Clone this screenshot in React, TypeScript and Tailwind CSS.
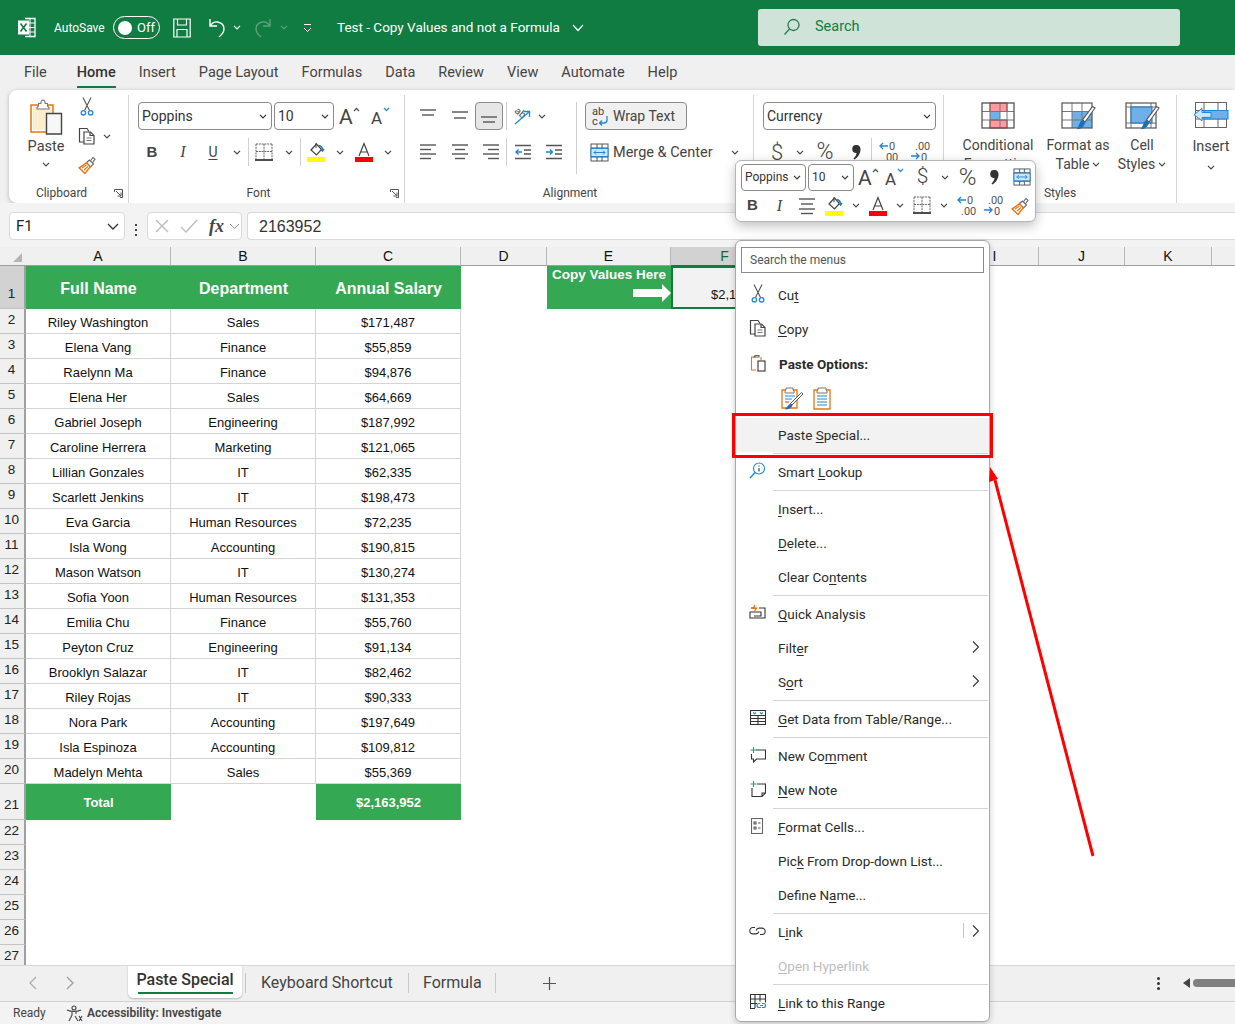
import React from 'react';

const people: [string, string, string][] = [
  ['Riley Washington', 'Sales', '$171,487'],
  ['Elena Vang', 'Finance', '$55,859'],
  ['Raelynn Ma', 'Finance', '$94,876'],
  ['Elena Her', 'Sales', '$64,669'],
  ['Gabriel Joseph', 'Engineering', '$187,992'],
  ['Caroline Herrera', 'Marketing', '$121,065'],
  ['Lillian Gonzales', 'IT', '$62,335'],
  ['Scarlett Jenkins', 'IT', '$198,473'],
  ['Eva Garcia', 'Human Resources', '$72,235'],
  ['Isla Wong', 'Accounting', '$190,815'],
  ['Mason Watson', 'IT', '$130,274'],
  ['Sofia Yoon', 'Human Resources', '$131,353'],
  ['Emilia Chu', 'Finance', '$55,760'],
  ['Peyton Cruz', 'Engineering', '$91,134'],
  ['Brooklyn Salazar', 'IT', '$82,462'],
  ['Riley Rojas', 'IT', '$90,333'],
  ['Nora Park', 'Accounting', '$197,649'],
  ['Isla Espinoza', 'Accounting', '$109,812'],
  ['Madelyn Mehta', 'Sales', '$55,369'],
];

const Chev = ({ color = '#444', size = 8 }: { color?: string; size?: number }) => (
  <svg width={size} height={size * 0.625} viewBox="0 0 8 5" fill="none">
    <path d="M1 .8l3 3 3-3" stroke={color} strokeWidth="1.2" />
  </svg>
);

const Cell: React.FC<{ className?: string; children?: React.ReactNode }> = ({ className = '', children }) => (
  <div className={`flex h-full shrink-0 items-center justify-center ${className}`}>{children}</div>
);

const Sep = () => <div className="h-full w-px shrink-0 bg-[#d0d0d0]" />;

// stack of grey bars used by the alignment icons
const Bars = ({ rows, color = '#555' }: { rows: [number, number, number][]; color?: string }) => (
  <svg width="18" height="18" viewBox="0 0 18 18" fill="none">
    {rows.map(([x1, x2, y]) => (
      <line key={`${x1}-${y}`} x1={x1} x2={x2} y1={y} y2={y} stroke={color} strokeWidth="1.4" />
    ))}
  </svg>
);

const Scissors = () => (
  <svg width="14" height="19" viewBox="0 0 14 19" fill="none">
    <path d="M3 .5l6.500 13M11 .5L4.500 13.500" stroke="#555" strokeWidth="1.100" />
    <circle cx="3.400" cy="15.800" r="2.200" stroke="#2b88d8" strokeWidth="1.400" />
    <circle cx="10.600" cy="15.800" r="2.200" stroke="#2b88d8" strokeWidth="1.400" />
  </svg>
);

const CopyIcon = () => (
  <svg width="18" height="18" viewBox="0 0 18 18" fill="none" stroke="#444" strokeWidth="1.200">
    <path d="M6 15H1.500V1.500H9l2 3" />
    <path d="M6 5h6.500l3.500 3.500V17H6z" fill="#fff" />
    <path d="M12 5v3.500h4" />
    <path d="M8.500 11h5M8.500 13.500h5" stroke="#777" />
  </svg>
);

const Brush = ({ size = 18 }: { size?: number }) => (
  <svg width={size} height={size} viewBox="0 0 18 18" fill="none">
    <path d="M11.500 6L15 1.500l2 1.800-3.500 4.700" fill="#fff" stroke="#666" strokeWidth="1.100" />
    <path d="M8.500 6.500L11.500 4l4 4-3 3z" fill="#fff" stroke="#666" strokeWidth="1.100" />
    <path d="M8.500 6.800L1 11.800 7 17.500l5.300-6.600z" fill="#fff" stroke="#e8760f" strokeWidth="1.400" />
    <path d="M4 12l4.500-3M6 14l4-3.500" stroke="#e8760f" strokeWidth="1.100" />
  </svg>
);

const ClipboardBig = () => (
  <svg width="34" height="36" viewBox="0 0 34 36" fill="none">
    <path d="M2 6h22v27H2z" fill="#fff" stroke="#e8760f" strokeWidth="1.500" />
    <path d="M4 8h18v23H4z" fill="#fbeed0" />
    <path d="M9.500 7V4.500h2.300C12 2.200 13 1 14 1s2 1.200 2.200 3.500h2.300V7l1.500 1.500V10H8V8.500z" fill="#fff" stroke="#777" strokeWidth="1.100" />
    <path d="M17.500 14.500H32.500V35H17.500z" fill="#f7f7f7" stroke="#444" strokeWidth="1.400" />
  </svg>
);

const GrowFont = ({ up }: { up: boolean }) => (
  <svg width="22" height="22" viewBox="0 0 22 22" fill="none">
    <text x="0" y="19" fontSize={up ? 21 : 17} fill="#444" fontFamily="Roboto">A</text>
    <path d={up ? 'M15 6l2.500-2.500L20 6' : 'M13 3l2.500 2.500L18 3'} stroke={up ? '#555' : '#2b88d8'} strokeWidth="1.300" />
  </svg>
);

const BorderIcon = () => (
  <svg width="18" height="19" viewBox="0 0 18 19" fill="none">
    <path d="M1 1h16M1 8.500h16M1 1v15M9 1v15M17 1v15" stroke="#666" strokeDasharray="2 .8" />
    <path d="M0 17h18" stroke="#222" strokeWidth="1.600" />
  </svg>
);

const FillIcon = ({ w = 18 }: { w?: number }) => (
  <svg width={w} height="20" viewBox="0 0 18 20" fill="none">
    <path d="M4 8l5.500-6 5 5.500-5 5.500z" fill="#fff" stroke="#444" strokeWidth="1.200" />
    <path d="M9 1v5" stroke="#444" />
    <path d="M12 3.500c2 .5 3.500 2 3.500 4.500M14 7l1.500 2L17 7" stroke="#1f78c1" strokeWidth="1.400" />
    <rect x="0" y="15" width="18" height="5" fill="#ffff00" />
  </svg>
);

const ColorA = ({ w = 18 }: { w?: number }) => (
  <svg width={w} height="20" viewBox="0 0 18 20" fill="none">
    <path d="M4 14L9 1.500 14 14M5.800 10h6.400" stroke="#444" strokeWidth="1.200" />
    <rect x="0" y="15" width="18" height="5" fill="#ff0000" />
  </svg>
);

const Outdent = ({ right }: { right?: boolean }) => (
  <svg width="18" height="18" viewBox="0 0 18 18" fill="none">
    <path d="M1 2.500h16M1 15.500h16M10 7h7M10 11h7" stroke="#555" strokeWidth="1.400" />
    <path d={right ? 'M1 9h6M5 6.500L7.500 9 5 11.500' : 'M8 9H2M4.500 6.500L2 9l2.500 2.500'} stroke="#1f87d6" strokeWidth="1.400" />
  </svg>
);

const MergeIcon = ({ size = 19 }: { size?: number }) => (
  <svg width={size} height={size} viewBox="0 0 19 19" fill="none">
    <rect x="1" y="1" width="17" height="17" fill="#fff" stroke="#555" />
    <path d="M1 5h17M1 14h17M7 1v4M12 1v4M7 14v4M12 14v4" stroke="#555" />
    <rect x="1" y="5.500" width="17" height="8" fill="#cfe6f8" stroke="#1f87d6" />
    <path d="M4 9.500h11M6 7.500l-2 2 2 2M13 7.500l2 2-2 2" stroke="#1f87d6" />
  </svg>
);

const WrapIcon = () => (
  <svg width="18" height="22" viewBox="0 0 18 22" fill="none">
    <text x="0" y="10" fontSize="11" fill="#444" fontFamily="Roboto">ab</text>
    <text x="0" y="20" fontSize="11" fill="#444" fontFamily="Roboto">c</text>
    <path d="M15 11v4a3 3 0 0 1-3 3H8M10 15.500L7.500 18l2.500 2.500" stroke="#1f87d6" strokeWidth="1.300" />
  </svg>
);

const OrientIcon = () => (
  <svg width="20" height="20" viewBox="0 0 20 20" fill="none">
    <g transform="rotate(40 8 8)"><text x="2" y="10" fontSize="10" fill="#444" fontFamily="Roboto">ab</text></g>
    <path d="M3 18L17 6M11.500 5.500H17.500V11" stroke="#1f87d6" strokeWidth="1.300" />
  </svg>
);

const DecIcon = ({ more }: { more?: boolean }) => (
  <svg width="20" height="22" viewBox="0 0 20 22" fill="none" fontFamily="Roboto" fontSize="11">
    <text x={more ? 5 : 11} y="9" fill="#555">{more ? '.00' : '0'}</text>
    <text x={more ? 11 : 5} y="20" fill="#555">{more ? '0' : '.00'}</text>
    <path d={more ? 'M1 15h8M6 12l3 3-3 3' : 'M10 5H2M5 2L2 5l3 3'} stroke="#1f87d6" strokeWidth="1.300" />
  </svg>
);

const Comma = () => (
  <svg width="9" height="15" viewBox="0 0 9 15">
    <path d="M4 0a4 4 0 0 1 4.500 4.200C8.500 9 5.500 12.500 2.500 14.500L1.500 13.500C3.500 11.500 4.500 9.800 4.500 8A4 4 0 0 1 4 0z" fill="#333" />
  </svg>
);

const GridIcon: React.FC<{ children?: React.ReactNode }> = ({ children }) => (
  <svg width="34" height="27" viewBox="0 0 34 27" fill="none">
    <rect x="1" y="1" width="32" height="25" fill="#fff" />
    {children}
    <path d="M1 9.500h32M1 18h32M9 1v25M19 1v25M26 1v25" stroke="#777" />
    <rect x="1" y="1" width="32" height="25" stroke="#555" strokeWidth="1.300" />
  </svg>
);

const HandleBrush = () => (
  <>
    <path d="M34 6L24 20l-2.500-2L31.500 4.500z" fill="#fff" stroke="#555" strokeWidth="1.100" />
    <path d="M21.500 18l2.500 2.200c-.5 4-3.500 7-8.500 7 2.500-2 2.500-7.500 6-9.200z" fill="#1f6fb5" />
  </>
);

const TableIconBrush = () => (
  <svg width="35" height="30" viewBox="0 0 35 30" fill="none">
    <rect x="1" y="1" width="30" height="25" fill="#fff" />
    <rect x="11" y="9.500" width="20" height="16.500" fill="#6fb0e8" />
    <path d="M1 9.500h30M1 18h30M11 1v25M21 1v25" stroke="#777" />
    <rect x="1" y="1" width="30" height="25" stroke="#555" strokeWidth="1.200" />
    <HandleBrush />
  </svg>
);

const CellStyleIcon = () => (
  <svg width="35" height="30" viewBox="0 0 35 30" fill="none">
    <rect x="1" y="1" width="30" height="25" fill="#fff" />
    <path d="M1 5h30M1 21h30M6 1v25M26 1v25" stroke="#777" />
    <rect x="6" y="5" width="21" height="16" fill="#6fb0e8" stroke="#1f6fb5" />
    <rect x="1" y="1" width="30" height="25" stroke="#555" strokeWidth="1.200" />
    <HandleBrush />
  </svg>
);

const Select: React.FC<{ text: string; className: string; small?: boolean }> = ({ text, className, small }) => (
  <div className={`flex shrink-0 items-center justify-between rounded-[4px] border border-[#8a8a8a] bg-white pl-[3px] pr-[4px] text-[#333] ${small ? 'text-[12px]' : 'text-[14px]'} ${className}`}>
    <span>{text}</span>
    <Chev color="#333" />
  </div>
);

const Group: React.FC<{ label?: string; launcher?: boolean; className: string; labelClass?: string; children: React.ReactNode }> = ({ label, launcher, className, labelClass = '', children }) => (
  <div className={`flex shrink-0 flex-col border-r border-[#d4d4d4] ${className}`}>
    <div className="h-[89px] pt-[7px]">{children}</div>
    <div className="grid h-[15px] grid-cols-[1fr_auto_1fr] items-center text-[12px] text-[#444]">
      <span />
      <span className={labelClass}>{label}</span>
      <span className="flex justify-end pr-[5px]">
        {launcher && (
          <svg width="9" height="9" viewBox="0 0 9 9" fill="none" stroke="#555">
            <path d="M.5 3V.5H8.500V8.500H6M2 2l5 5M3.500 7H7V3.500" />
          </svg>
        )}
      </span>
    </div>
  </div>
);

const TitleBar = () => (
  <div className="flex h-[55px] shrink-0 items-center bg-[#107c41] text-white">
    <div className="flex w-[758px] shrink-0 items-center">
      <svg className="ml-[18px]" width="18" height="21" viewBox="0 0 18 21" fill="none">
        <path d="M7 1.500h10v18H7" stroke="#fff" strokeWidth="1.300" />
        <path d="M7 6h10M7 10.500h10M7 15h10M12 1.500v18" stroke="#fff" />
        <rect x="0" y="3.500" width="11" height="14" fill="#fff" />
        <path d="M2.500 6.500l6 8M8.500 6.500l-6 8" stroke="#107c41" strokeWidth="1.600" />
      </svg>
      <span className="ml-[18px] w-[50px] whitespace-nowrap text-[12px]">AutoSave</span>
      <div className="ml-[9px] flex h-[23px] w-[47px] items-center rounded-full border border-white pl-[4px]">
        <span className="h-[14px] w-[14px] rounded-full bg-white" />
        <span className="ml-[5px] text-[13px]">Off</span>
      </div>
      <svg className="ml-[13px]" width="18" height="20" viewBox="0 0 18 20" fill="none" stroke="#fff" strokeWidth="1.200">
        <path d="M.8 1h16.400v18H.8zM4.500 1v6h9V1M4 19v-7.500h10V19" />
      </svg>
      <svg className="ml-[17px]" width="18" height="20" viewBox="0 0 18 20" fill="none" stroke="#fff" strokeWidth="1.400">
        <path d="M2 1v7h7M2 8c2-3 4.500-4.500 7.500-4 4 .7 6.500 3.500 6.500 7 0 3.500-2.500 6-5 8" />
      </svg>
      <span className="ml-[7px]"><Chev color="#fff" /></span>
      <svg className="ml-[13px]" width="18" height="20" viewBox="0 0 18 20" fill="none" stroke="#5ba37c" strokeWidth="1.400">
        <path d="M16 1v7H9M16 8c-2-3-4.500-4.500-7.500-4-4 .7-6.500 3.500-6.500 7 0 3.500 2.500 6 5 8" />
      </svg>
      <span className="ml-[8px]"><Chev color="#5ba37c" /></span>
      <svg className="ml-[15px]" width="9" height="10" viewBox="0 0 9 10" fill="none" stroke="#fff">
        <path d="M1 1.500h7M1 5l3.500 3.500L8 5" />
      </svg>
      <span className="ml-[25px] w-[230px] whitespace-nowrap text-[13.500px]">Test - Copy Values and not a Formula</span>
      <svg className="ml-[5px]" width="12" height="8" viewBox="0 0 12 8" fill="none" stroke="#fff" strokeWidth="1.200">
        <path d="M1 1l5 5.500L11 1" />
      </svg>
    </div>
    <div className="flex h-[37px] w-[422px] items-center rounded-[3px] bg-[#cfe3d8] pb-[1px] pl-[25px] text-[14.500px] text-[#107c41]">
      <svg width="18" height="18" viewBox="0 0 18 18" fill="none" stroke="#2a7a52" strokeWidth="1.300">
        <circle cx="10.500" cy="7" r="5.500" />
        <path d="M6.500 11l-5 5.500" />
      </svg>
      <span className="ml-[14px]">Search</span>
    </div>
  </div>
);

const TabRow = () => (
  <div className="flex h-[35px] shrink-0 items-center gap-[23px] bg-[#f0f0f0] pl-[24px] pt-px text-[14.500px] text-[#444]">
    <span>File</span>
    <span className="relative ml-[7px] font-medium text-[#333]">
      Home
      <span className="absolute inset-x-0 -bottom-[4px] h-[2px] bg-[#107c41]" />
    </span>
    <span>Insert</span>
    <span>Page Layout</span>
    <span>Formulas</span>
    <span>Data</span>
    <span>Review</span>
    <span>View</span>
    <span>Automate</span>
    <span>Help</span>
  </div>
);

const Ribbon = () => (
  <div className="flex h-[113px] shrink-0 bg-[#f0f0f0] pl-[9px]">
    <div className="flex flex-1 rounded-l-[8px] bg-white pt-[5px] shadow-[0_1px_4px_rgba(0,0,0,0.25)]">
      <Group label="Clipboard" launcher className="w-[120px]" labelClass="-translate-x-[7px]">
        <div className="flex">
          <div className="ml-[5px] flex w-[64px] -translate-y-[3px] flex-col items-center">
            <ClipboardBig />
            <span className="mt-[3px] text-[14.500px] leading-[18px] text-[#444]">Paste</span>
            <span className="mt-[6px]"><Chev /></span>
          </div>
          <div className="-mt-[5px] flex flex-col">
            <div className="flex h-[19px] w-[18px] items-center justify-center"><Scissors /></div>
            <div className="mt-[6px] flex h-[28px] items-center">
              <CopyIcon />
              <span className="ml-[7px]"><Chev /></span>
            </div>
            <div className="flex h-[30px] items-center"><Brush /></div>
          </div>
        </div>
      </Group>

      <Group label="Font" launcher className="w-[276px]" labelClass="-translate-x-[8px]">
        <div className="flex h-[28px] pl-[9px]">
          <Select text="Poppins" className="w-[134px]" />
          <Select text="10" className="ml-[2px] w-[60px]" />
          <Cell className="w-[32px]"><GrowFont up /></Cell>
          <Cell className="w-[31px]"><GrowFont up={false} /></Cell>
        </div>
        <div className="mt-[8px] flex h-[28px] pl-[8px] text-[#444]">
          <Cell className="w-[30px] font-['Liberation_Sans',sans-serif] text-[15px] font-bold">B</Cell>
          <Cell className="ml-px w-[30px] font-['Liberation_Serif',serif] text-[16px] italic">I</Cell>
          <Cell className="w-[30px] text-[14px] underline underline-offset-2">U</Cell>
          <Cell className="w-[18px]"><Chev /></Cell>
          <span className="ml-[2px]"><Sep /></span>
          <Cell className="ml-px w-[28px]"><BorderIcon /></Cell>
          <Cell className="ml-[2px] w-[18px]"><Chev /></Cell>
          <span className="ml-[2px]"><Sep /></span>
          <Cell className="ml-px w-[28px]"><FillIcon /></Cell>
          <Cell className="ml-px w-[18px]"><Chev /></Cell>
          <Cell className="ml-px w-[28px]"><ColorA /></Cell>
          <Cell className="ml-px w-[18px]"><Chev /></Cell>
        </div>
      </Group>

      <Group label="Alignment" className="w-[349px]" labelClass="-translate-x-[9px]">
        <div className="flex h-[72px]">
          <div className="ml-[7px] w-[165px] border-r border-[#d0d0d0]">
            <div className="flex h-[28px]">
              <Cell className="w-[32px]"><Bars rows={[[1, 17, 3], [3, 15, 8]]} /></Cell>
              <Cell className="w-[31px]"><Bars rows={[[1, 17, 5], [3, 15, 11]]} /></Cell>
              <Cell className="w-[28px] rounded-[4px] border border-[#8a8a8a] bg-[#e6e6e6]"><Bars rows={[[1, 17, 10], [3, 15, 15]]} /></Cell>
              <span className="ml-[3px]"><Sep /></span>
              <Cell className="w-[30px]"><OrientIcon /></Cell>
              <Cell className="w-[10px]"><Chev /></Cell>
            </div>
            <div className="mt-[8px] flex h-[28px]">
              <Cell className="w-[32px]"><Bars rows={[[1, 17, 2], [1, 12, 6.500], [1, 17, 11], [1, 12, 15.500]]} /></Cell>
              <Cell className="w-[31px]"><Bars rows={[[1, 17, 2], [4, 14, 6.500], [1, 17, 11], [4, 14, 15.500]]} /></Cell>
              <Cell className="w-[31px]"><Bars rows={[[1, 17, 2], [6, 17, 6.500], [1, 17, 11], [6, 17, 15.500]]} /></Cell>
              <Sep />
              <Cell className="ml-px w-[30px]"><Outdent /></Cell>
              <Cell className="ml-px w-[30px]"><Outdent right /></Cell>
            </div>
          </div>
          <div className="pl-[8px]">
            <div className="flex h-[28px] w-[102px] items-center rounded-[4px] border border-[#8a8a8a] bg-[#f0f0f0] pl-[6px] text-[14px] text-[#444]">
              <WrapIcon />
              <span className="ml-[3px] pt-px">Wrap Text</span>
            </div>
            <div className="mt-[8px] flex h-[28px] items-center pl-[5px] text-[14.500px] text-[#444]">
              <MergeIcon />
              <span className="ml-[4px] w-[118px] pt-[2px]">Merge &amp; Center</span>
              <Chev />
            </div>
          </div>
        </div>
      </Group>

      <Group label="Number" className="w-[190px]">
        <div className="flex h-[28px] pl-[9px]">
          <Select text="Currency" className="w-[173px]" />
        </div>
        <div className="mt-[8px] flex h-[28px] pl-[9px]">
          <Cell className="w-[28px] text-[22px] font-light text-[#444]">$</Cell>
          <Cell className="w-[18px]"><Chev /></Cell>
          <Cell className="w-[32px] text-[23px] font-light text-[#444]">%</Cell>
          <Cell className="w-[30px]"><Comma /></Cell>
          <Sep />
          <Cell className="w-[32px]"><DecIcon /></Cell>
          <Cell className="w-[32px]"><DecIcon more /></Cell>
        </div>
      </Group>

      <Group label="Styles" className="w-[233px]">
        <div className="flex text-[14px] leading-[19px] text-[#444]">
          <div className="ml-[18px] flex w-[72px] flex-col items-center">
            <GridIcon>
              <rect x="9" y="1" width="17" height="8.500" fill="#ff9aa2" stroke="#e02020" />
              <rect x="9" y="9.500" width="10" height="8.500" fill="#6fb0e8" />
              <rect x="9" y="18" width="17" height="8" fill="#ff9aa2" stroke="#e02020" />
            </GridIcon>
            <span className="mt-[7px] whitespace-nowrap">Conditional</span>
            <span className="whitespace-nowrap">Formatting</span>
          </div>
          <div className="ml-[12px] flex w-[64px] flex-col items-center">
            <TableIconBrush />
            <span className="mt-[4px] whitespace-nowrap">Format as</span>
            <span className="flex items-center gap-[3px]">Table <Chev /></span>
          </div>
          <div className="flex w-[64px] flex-col items-center">
            <CellStyleIcon />
            <span className="mt-[4px]">Cell</span>
            <span className="flex items-center gap-[3px]">Styles <Chev /></span>
          </div>
        </div>
      </Group>

      <div className="ml-[14px] flex w-[40px] flex-col items-center pt-[6px] text-[14.500px] text-[#444]">
        <svg width="36" height="28" viewBox="0 0 36 28" fill="none">
          <rect x="2.500" y="1.500" width="31" height="25" fill="#fff" stroke="#666" />
          <path d="M2.500 9.500h31M2.500 18h31M11 1.500v25M25 1.500v25" stroke="#666" />
          <rect x="11" y="9.500" width="24" height="8.500" fill="#6fb0e8" stroke="#1f87d6" />
          <path d="M18 11.500H9V7.500l-8 6.200 8 6.200v-3.500h9z" fill="#cfe6f8" stroke="#1f87d6" />
        </svg>
        <span className="mt-[7px]">Insert</span>
        <span className="mt-[7px]"><Chev /></span>
      </div>
    </div>
  </div>
);

const FormulaBar = () => (
  <div className="flex h-[44px] shrink-0 bg-[#f3f3f3] pl-[9px] pt-[9px]">
    <div className="flex h-[28px] w-[116px] items-center justify-between rounded-[4px] border border-[#d9d9d9] bg-white pl-[6px] pr-[5px] text-[15px] text-[#222]">
      <span>F1</span>
      <svg width="12" height="7" viewBox="0 0 12 7" fill="none" stroke="#333" strokeWidth="1.300"><path d="M1 1l5 5 5-5" /></svg>
    </div>
    <div className="flex w-[22px] flex-col items-center justify-center gap-[3px]">
      <span className="h-[2px] w-[2px] bg-[#444]" />
      <span className="h-[2px] w-[2px] bg-[#444]" />
      <span className="h-[2px] w-[2px] bg-[#444]" />
    </div>
    <div className="flex h-[28px] w-[95px] items-center rounded-[4px] border border-[#d9d9d9] bg-white pl-[7px]">
      <svg width="14" height="14" viewBox="0 0 14 14" fill="none" stroke="#bbb" strokeWidth="1.300"><path d="M1 1l12 12M13 1L1 13" /></svg>
      <svg className="ml-[11px]" width="18" height="14" viewBox="0 0 18 14" fill="none" stroke="#bbb" strokeWidth="1.300"><path d="M1 8l5 5L17 1" /></svg>
      <span className="ml-[11px] font-['Liberation_Serif',serif] text-[18px] font-bold italic leading-none text-[#444]">fx</span>
      <span className="ml-[5px]"><svg width="11" height="7" viewBox="0 0 11 7" fill="none" stroke="#999"><path d="M1 1l4.500 4.500L10 1" /></svg></span>
    </div>
    <div className="ml-[5px] flex h-[28px] flex-1 items-center rounded-l-[4px] border border-r-0 border-[#d9d9d9] bg-white pl-[11px] pt-[1px] font-['Liberation_Sans',sans-serif] text-[16px] text-[#333]">
      2163952
    </div>
  </div>
);

const columnHeads: [string, string][] = [
  ['A', 'w-[145px]'], ['B', 'w-[145px]'], ['C', 'w-[145px]'], ['D', 'w-[86px]'], ['E', 'w-[124px]'],
  ['F', 'w-[108px]'], ['G', 'w-[86px]'], ['H', 'w-[86px]'], ['I', 'w-[88px]'], ['J', 'w-[86px]'], ['K', 'w-[87px]'],
];

const RowHead: React.FC<{ n: number; className?: string }> = ({ n, className = 'bg-[#f0f0f0] pb-[2px]' }) => (
  <div className={`flex w-[26px] shrink-0 items-center justify-center border-b border-r-2 border-b-[#c4c4c4] border-r-[#a0a0a0] pr-[1px] text-[13.500px] text-[#222] ${className}`}>
    {n}
  </div>
);

const Sheet = () => (
  <div className="flex-1 overflow-hidden bg-white font-['Liberation_Sans',Arial,sans-serif] text-[13px] text-[#111]">
    <div className="flex h-[19px] bg-[#f0f0f0]">
      <div className="flex w-[26px] shrink-0 items-end justify-end border-b border-[#9e9e9e] pb-[3px] pr-[4px]">
        <svg width="9" height="9" viewBox="0 0 9 9"><path d="M9 0v9H0z" fill="#b5b5b5" /></svg>
      </div>
      {columnHeads.map(([c, w]) => (
        <div
          key={c}
          className={`flex shrink-0 items-center justify-center border-b border-r border-r-[#b8b8b8] pt-[1px] text-[14px] ${c === 'F' ? 'border-b-[#107c41] bg-[#d2d2d2] text-[#0c6b37]' : 'border-b-[#9e9e9e]'} ${w}`}
        >
          {c}
        </div>
      ))}
      <div className="flex-1 border-b border-[#9e9e9e]" />
    </div>

    <div className="flex h-[43px]">
      <RowHead n={1} className="bg-[#d2d2d2] pt-[15px] text-[#0c6b37]" />
      {['Full Name', 'Department', 'Annual Salary'].map((h) => (
        <div key={h} className="flex w-[145px] items-center justify-center bg-[#34a853] pt-[3px] text-[16px] font-bold text-white">
          {h}
        </div>
      ))}
      <div className="w-[86px]" />
      <div className="flex w-[124px] flex-col bg-[#34a853] text-white">
        <span className="text-center text-[13.500px] font-bold leading-[18px]">Copy Values Here</span>
        <svg className="self-end" width="38" height="18" viewBox="0 0 38 18"><path d="M0 5h29V0l9 9-9 9v-5H0z" fill="#fff" /></svg>
      </div>
      <div className="z-10 flex w-[108px] items-end border-2 border-[#107c41] bg-[#f2f2f2] pb-[3px] pl-[38px] text-[13px]">
        $2,163,952
      </div>
    </div>

    {people.map(([name, dept, pay], i) => (
      <div key={`${name}-${pay}`} className="flex h-[25px]">
        <RowHead n={i + 2} />
        {[name, dept, pay].map((v) => (
          <div key={v} className="flex w-[145px] items-center justify-center border-b border-r border-[#d4d4d4] pt-[3px]">
            {v}
          </div>
        ))}
      </div>
    ))}

    <div className="flex h-[36px]">
      <RowHead n={21} className="bg-[#f0f0f0] pt-[8px]" />
      <div className="flex w-[145px] items-center justify-center bg-[#34a853] pt-[2px] font-bold text-white">Total</div>
      <div className="w-[145px]" />
      <div className="flex w-[145px] items-center justify-center bg-[#34a853] pt-[2px] font-bold text-white">$2,163,952</div>
    </div>
    {[22, 23, 24, 25, 26, 27].map((n) => (
      <div key={n} className="flex h-[25px]"><RowHead n={n} /></div>
    ))}
  </div>
);

const SheetTabs = () => (
  <div className="flex h-[36px] shrink-0 items-start border-t border-[#d8d8d8] bg-[#f0f0f0] text-[16px] text-[#444]">
    <div className="flex h-[34px] w-[128px] shrink-0 items-center pl-[28px]">
      <svg width="10" height="14" viewBox="0 0 10 14" fill="none" stroke="#aaa" strokeWidth="1.200"><path d="M8 1L2 7l6 6" /></svg>
      <svg className="ml-[27px]" width="10" height="14" viewBox="0 0 10 14" fill="none" stroke="#999" strokeWidth="1.200"><path d="M2 1l6 6-6 6" /></svg>
    </div>
    <div className="flex h-[32px] w-[114px] shrink-0 flex-col items-center rounded-b-[5px] bg-white shadow-[0_1px_2px_rgba(0,0,0,0.25)]">
      <span className="mt-[2px] whitespace-nowrap font-medium leading-[24px] text-[#333]">Paste Special</span>
      <span className="h-[2px] w-[95px] bg-[#107c41]" />
    </div>
    <div className="mt-[7px] flex h-[20px] items-center text-[#444]">
      <span className="ml-[3px] h-full w-px bg-[#c8c8c8]" />
      <span className="ml-[15px] w-[132px] whitespace-nowrap">Keyboard Shortcut</span>
      <span className="ml-[15px] h-full w-px bg-[#c8c8c8]" />
      <span className="ml-[14px] w-[58px]">Formula</span>
      <span className="ml-[14px] h-full w-px bg-[#c8c8c8]" />
      <svg className="ml-[47px]" width="13" height="13" viewBox="0 0 13 13" stroke="#555" strokeWidth="1.200"><path d="M6.500 0v13M0 6.500h13" /></svg>
    </div>
    <div className="ml-auto flex h-[34px] items-center">
      <div className="mr-[2px] flex flex-col gap-[2px]">
        <span className="h-[3px] w-[3px] rounded-full bg-[#333]" />
        <span className="h-[3px] w-[3px] rounded-full bg-[#333]" />
        <span className="h-[3px] w-[3px] rounded-full bg-[#333]" />
      </div>
      <svg className="ml-[21px]" width="7" height="10" viewBox="0 0 7 10"><path d="M7 0v10L0 5z" fill="#444" /></svg>
      <span className="ml-[3px] h-[8px] w-[42px] rounded-l-full bg-[#808080]" />
    </div>
  </div>
);

const StatusBar = () => (
  <div className="flex h-[23px] shrink-0 items-center border-t border-[#d0d0d0] bg-[#f3f3f3] pl-[13px] text-[12px] text-[#444]">
    <span className="w-[32px]">Ready</span>
    <svg className="ml-[21px]" width="17" height="17" viewBox="0 0 17 17" fill="none" stroke="#444" strokeWidth="1.100">
      <circle cx="8" cy="3" r="2" />
      <path d="M1 5c2 1 4 1.500 7 1.500S13 6 15 5M6 7v3l-3 6M10 7v2M9 11l3 5M13 11l3 5M16 11l-3 5" />
    </svg>
    <span className="ml-[4px] font-semibold">Accessibility: Investigate</span>
  </div>
);

const MiniToolbar = () => (
  <div className="absolute left-[735px] top-[160px] z-20 h-[62px] w-[301px] rounded-[6px] border border-[#b5b5b5] bg-white shadow-[0_4px_12px_rgba(0,0,0,0.25)]">
    <div className="flex h-[28px] items-center pl-[5px] pt-[4px] text-[#444]">
      <Select text="Poppins" small className="h-[27px] w-[65px]" />
      <Select text="10" small className="ml-[2px] h-[27px] w-[46px]" />
      <Cell className="ml-[2px] w-[26px]"><GrowFont up /></Cell>
      <Cell className="w-[27px]"><GrowFont up={false} /></Cell>
      <Cell className="w-[27px] text-[21px] font-light">$</Cell>
      <Cell className="w-[18px]"><Chev /></Cell>
      <Cell className="w-[27px] text-[24px] font-light">%</Cell>
      <Cell className="w-[27px]"><Comma /></Cell>
      <Cell className="w-[27px]"><MergeIcon size={18} /></Cell>
    </div>
    <div className="flex h-[28px] items-center pl-[3px] pt-[5px] text-[#444]">
      <Cell className="w-[27px] font-['Liberation_Sans',sans-serif] text-[15px] font-bold">B</Cell>
      <Cell className="w-[27px] font-['Liberation_Serif',serif] text-[16px] italic">I</Cell>
      <Cell className="w-[27px]"><Bars rows={[[1, 17, 2], [3, 15, 7], [1, 17, 12], [3, 15, 16.500]]} /></Cell>
      <Cell className="w-[27px]"><FillIcon /></Cell>
      <Cell className="w-[17px]"><Chev /></Cell>
      <Cell className="w-[27px]"><ColorA /></Cell>
      <Cell className="w-[17px]"><Chev /></Cell>
      <Cell className="w-[27px]"><BorderIcon /></Cell>
      <Cell className="w-[17px]"><Chev /></Cell>
      <Cell className="w-[27px]"><DecIcon /></Cell>
      <Cell className="w-[27px]"><DecIcon more /></Cell>
      <Cell className="w-[27px]"><Brush /></Cell>
    </div>
  </div>
);

// shared stroke for the monochrome menu glyphs
const MenuSvg: React.FC<{ children: React.ReactNode; w?: number; h?: number }> = ({ children, w = 18, h = 18 }) => (
  <svg width={w} height={h} viewBox={`0 0 ${w} ${h}`} fill="none" stroke="#333" strokeWidth="1.100">{children}</svg>
);

const PasteIcon = () => (
  <MenuSvg w={16} h={18}>
    <path d="M6 3H1.500v13H6" stroke="#e8760f" />
    <path d="M4 3h5V1.500H5z" stroke="#666" />
    <path d="M11 3v3" stroke="#e8760f" />
    <rect x="8" y="7" width="7" height="10" />
  </MenuSvg>
);

const LookupIcon = () => (
  <MenuSvg w={17} h={17}>
    <circle cx="10" cy="6.500" r="5.500" stroke="#1f87d6" />
    <path d="M6 10.500l-5 5.500" stroke="#1f87d6" strokeWidth="1.400" />
    <path d="M10 6v3.500M10 3.500v1" stroke="#333" />
  </MenuSvg>
);

const QuickIcon = () => (
  <MenuSvg w={17} h={17}>
    <path d="M2 4h3M10 4h6v10H1V8h11v4H5" />
    <path d="M6 0L3 5h3L4.500 9 9 3.500H6z" fill="#e8760f" stroke="none" />
  </MenuSvg>
);

const TableIcon = () => (
  <MenuSvg w={16} h={15}>
    <rect x=".5" y=".5" width="15" height="14" />
    <path d="M.5 5.500h15M.5 8.500h15M.5 11.500h15M8 5.500v9" />
    <path d="M3 2.500l1.500 1.200L6 2.500M10 2.500l1.500 1.200L13 2.500" stroke="#1f87d6" />
  </MenuSvg>
);

const CommentIcon = () => (
  <MenuSvg w={16} h={16}>
    <path d="M6 3h9.500v9H6.500L3.500 15v-3H1.500V7" />
    <path d="M3.500 0v6M.5 3h6" stroke="#21a366" />
  </MenuSvg>
);

const NoteIcon = () => (
  <MenuSvg w={16} h={16}>
    <path d="M7 3h8.500v9L12 15.500H2V7M15.500 12H12v3.500" />
    <path d="M3.500 0v6M.5 3h6" stroke="#21a366" />
  </MenuSvg>
);

const FormatCellsIcon = () => (
  <MenuSvg w={13} h={16}>
    <rect x=".5" y=".5" width="11" height="15" stroke="#666" />
    <path d="M3 4h2v2H3zM3 9h2v2H3zM7 5h2.500M7 10h2.500" stroke="#555" />
  </MenuSvg>
);

const LinkIcon = () => (
  <MenuSvg w={17} h={10}>
    <path d="M6 1.500H4a3.200 3.200 0 0 0 0 6.400h3a3.200 3.200 0 0 0 2.800-2.400" />
    <path d="M11 8.500h2a3.200 3.200 0 0 0 0-6.400h-3A3.200 3.200 0 0 0 7.200 4.500" />
  </MenuSvg>
);

const LinkRangeIcon = () => (
  <MenuSvg w={16} h={15}>
    <path d="M5 14.500H.5V.5h15v8M.5 5h15M.5 9.500H7M5 .5V14M10 .5v7" />
    <path d="M10 9.500H9a2 2 0 0 0 0 4h2M12 13.500h1.500a2 2 0 0 0 0-4H12M10 11.500h3" stroke="#1f87d6" />
  </MenuSvg>
);

const ArrowRight = () => (
  <svg width="7" height="12" viewBox="0 0 7 12" fill="none" stroke="#333" strokeWidth="1.100"><path d="M1 .5L6.500 6 1 11.500" /></svg>
);

const Accel: React.FC<{ t: string }> = ({ t }) => {
  const i = t.indexOf('&');
  if (i < 0) return <>{t}</>;
  return <>{t.slice(0, i)}<u className="underline underline-offset-2">{t[i + 1]}</u>{t.slice(i + 2)}</>;
};

const MenuItem: React.FC<{ label: string; icon?: React.ReactNode; className?: string; end?: React.ReactNode }> = ({ label, icon, className = '', end }) => (
  <div className={`flex h-[34px] items-center ${className}`}>
    <div className="flex w-[42px] shrink-0 justify-center pb-[3px] pl-[1px]">{icon}</div>
    <span className="flex-1 pt-px"><Accel t={label} /></span>
    {end}
  </div>
);

const MenuRule = () => <div className="my-px ml-[37px] mr-px h-px bg-[#d4d4d4]" />;

const ContextMenu = () => (
  <div className="absolute left-[735px] top-[240px] z-20 flex h-[782px] w-[255px] flex-col rounded-[6px] border border-[#a8a8a8] bg-white text-[13.500px] text-[#2b2b2b] shadow-[0_2px_6px_rgba(0,0,0,0.2)]">
    <div className="mx-[5px] mb-[5px] mt-[6px] flex h-[26px] w-[243px] shrink-0 items-center border border-[#8a8a8a] px-[8px] text-[12px] text-[#555]">
      Search the menus
    </div>
    <MenuItem label="Cu&t" icon={<Scissors />} />
    <MenuItem label="&Copy" icon={<CopyIcon />} />
    <MenuItem label="Paste Options:" icon={<PasteIcon />} className="mt-px font-bold [&>span]:pl-px" />
    <div className="flex h-[37px] items-center pb-[3px] pl-[44px]">
      <svg width="24" height="24" viewBox="0 0 24 24" fill="none">
        <path d="M2 4h15v18H2z" fill="#fff" stroke="#e8760f" strokeWidth="1.300" />
        <path d="M6 4V2h7v2l1 1v2H5V5z" fill="#fff" stroke="#777" />
        <path d="M5 10h10M5 13h7" stroke="#1f87d6" />
        <path d="M5 16h4" stroke="#e02020" />
        <path d="M23 8L12 19l-1.500-1.500L21.500 6.500z" fill="#fff" stroke="#555" />
        <path d="M10.500 17.500l2 2c-1 2.500-4 4-8 4 2.500-1.500 3.500-5 6-6z" fill="#1f6fb5" />
      </svg>
      <svg className="ml-[9px]" width="18" height="24" viewBox="0 0 18 24" fill="none">
        <path d="M1 4h16v19H1z" fill="#fff" stroke="#e8760f" strokeWidth="1.300" />
        <path d="M5 4V2h8v2l1 1v2H4V5z" fill="#fff" stroke="#777" />
        <path d="M4 10h10M4 13h10M4 16h10M4 19h10" stroke="#1f87d6" />
      </svg>
    </div>
    <MenuItem label="Paste &Special..." className="bg-[#f2f2f2]" />
    <MenuRule />
    <MenuItem label="Smart &Lookup" icon={<LookupIcon />} />
    <MenuRule />
    <MenuItem label="&Insert..." />
    <MenuItem label="&Delete..." />
    <MenuItem label="Clear Co&ntents" />
    <MenuRule />
    <MenuItem label="&Quick Analysis" icon={<QuickIcon />} />
    <MenuItem label="Filt&er" end={<span className="mb-[3px] mr-[10px]"><ArrowRight /></span>} />
    <MenuItem label="S&ort" end={<span className="mb-[3px] mr-[10px]"><ArrowRight /></span>} />
    <MenuRule />
    <MenuItem label="&Get Data from Table/Range..." icon={<TableIcon />} />
    <MenuRule />
    <MenuItem label="New Co&mment" icon={<CommentIcon />} />
    <MenuItem label="&New Note" icon={<NoteIcon />} />
    <MenuRule />
    <MenuItem label="&Format Cells..." icon={<FormatCellsIcon />} />
    <MenuItem label="Pic&k From Drop-down List..." />
    <MenuItem label="Define N&ame..." />
    <MenuRule />
    <MenuItem
      label="L&ink"
      icon={<LinkIcon />}
      end={
        <span className="mb-[3px] mr-[10px] flex items-center gap-[8px]">
          <span className="h-[15px] w-px bg-[#c8c8c8]" />
          <ArrowRight />
        </span>
      }
    />
    <MenuItem label="&Open Hyperlink" className="text-[#bdbdbd]" />
    <MenuRule />
    <MenuItem label="&Link to this Range" icon={<LinkRangeIcon />} />
  </div>
);

export default function App() {
  return (
    <div className="relative flex h-[1024px] w-[1235px] flex-col overflow-hidden font-['Roboto',sans-serif]">
      <TitleBar />
      <TabRow />
      <Ribbon />
      <FormulaBar />
      <Sheet />
      <SheetTabs />
      <StatusBar />
      <MiniToolbar />
      <ContextMenu />
      {/* callout the tutorial drew over the screenshot */}
      <div className="absolute left-[732px] top-[413px] z-30 h-[45px] w-[261px] border-[3px] border-[#ff0000]" />
      <svg className="absolute left-[975px] top-[455px] z-30" width="130" height="410" viewBox="0 0 130 410" fill="none">
        <path d="M118 401L20 25" stroke="#ff0000" strokeWidth="3" />
        <path d="M15 12L14 27l9-3z" fill="#ff0000" />
      </svg>
    </div>
  );
}
